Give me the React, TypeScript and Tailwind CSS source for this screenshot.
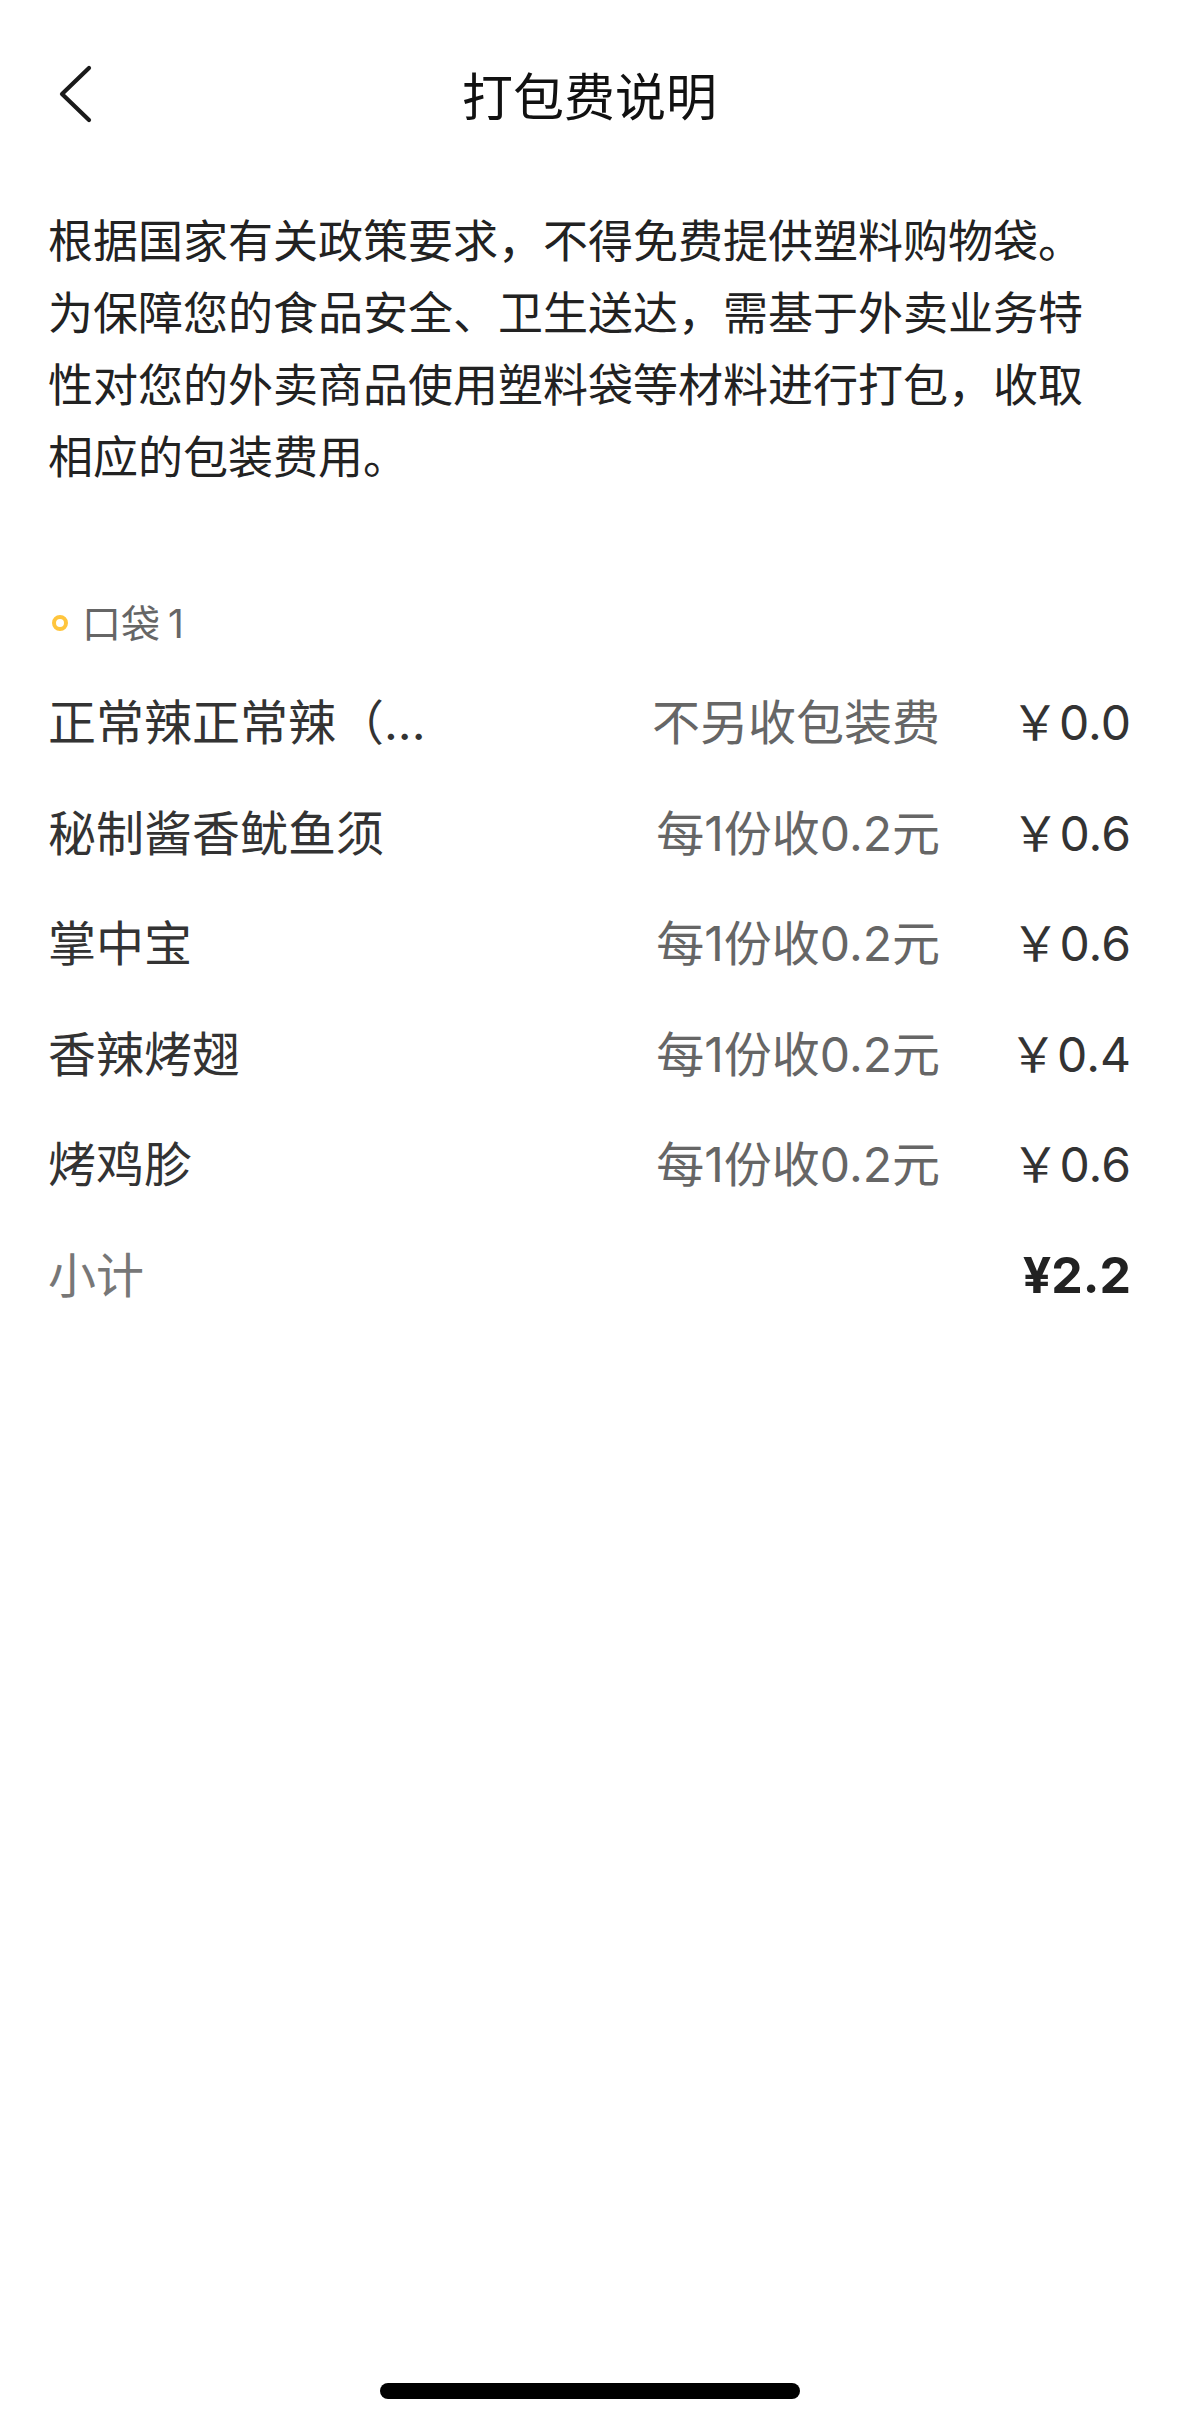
const items = [
  { name: "正常辣正常辣（...", rule: "不另收包装费", price: "￥0.0" },
  { name: "秘制酱香鱿鱼须", rule: "每1份收0.2元", price: "￥0.6" },
  { name: "掌中宝", rule: "每1份收0.2元", price: "￥0.6" },
  { name: "香辣烤翅", rule: "每1份收0.2元", price: "￥0.4" },
  { name: "烤鸡胗", rule: "每1份收0.2元", price: "￥0.6" },
];

export default function App() {
  return (
    <div className="relative flex h-[2423px] w-[1179px] flex-col bg-white font-['Inter','Noto_Sans_CJK_SC',sans-serif] text-[#333]">
      {/* Nav bar */}
      <header className="relative flex h-[194px] items-center justify-center">
        <button aria-label="返回" className="absolute left-[56px] top-[62px] text-[#1a1a1a]">
          <svg width="40" height="64" viewBox="0 0 40 64" fill="none">
            <path
              d="M33 6 L6 32 L33 58"
              stroke="currentColor"
              strokeWidth="4.2"
              strokeLinecap="round"
              strokeLinejoin="round"
            />
          </svg>
        </button>
        <h1 className="text-[51px] leading-none text-[#111]">打包费说明</h1>
      </header>

      <p className="mt-[12px] pl-[48px] pr-[92px] text-[45px] leading-[72px] text-[#222]">
        根据国家有关政策要求，不得免费提供塑料购物袋。为保障您的食品安全、卫生送达，需基于外卖业务特性对您的外卖商品使用塑料袋等材料进行打包，收取相应的包装费用。
      </p>

      <section className="mt-[102px] px-[48px]">
        <div className="flex h-[54px] items-center gap-[14px]">
          <span className="ml-[4px] size-[16px] rounded-full border-[4px] border-[#ffc53d]" />
          <span className="text-[39px] leading-none text-[#666]">
            口袋<span className="ml-[8px]">1</span>
          </span>
        </div>

        <div className="mt-[18px]">
          {items.map((it) => (
            <div key={it.name} className="flex h-[110.5px] items-center text-[48px]">
              <span className="flex-1 truncate text-[#333]">{it.name}</span>
              <span className="text-right text-[#666]">{it.rule}</span>
              <span className="w-[191px] text-right text-[#333]">{it.price}</span>
            </div>
          ))}
          <div className="flex h-[110.5px] items-center justify-between">
            <span className="text-[48px] text-[#777]">小计</span>
            <span className="text-[50px] font-bold text-[#222]">¥2.2</span>
          </div>
        </div>
      </section>

      {/* Home indicator */}
      <div className="mt-auto flex h-[40px] justify-center">
        <div className="h-[16px] w-[420px] rounded-full bg-black" />
      </div>
    </div>
  );
}
